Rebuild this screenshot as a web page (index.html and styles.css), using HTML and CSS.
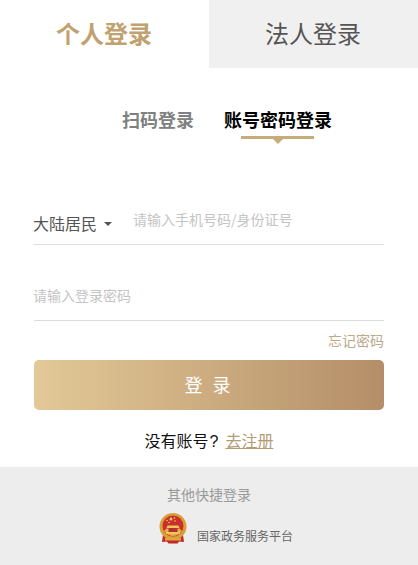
FILE: index.html
```html
<!DOCTYPE html>
<html lang="zh-CN">
<head>
<meta charset="utf-8">
<title>登录</title>
<link rel="stylesheet" href="styles.css">
</head>
<body>
<div class="tabs">
  <div class="tab active">个人登录</div>
  <div class="tab">法人登录</div>
</div>
<div class="subtabs">
  <div class="subtab">扫码登录</div>
  <div class="subtab current">账号密码登录</div>
</div>
<form class="form">
  <div class="field first">
    <span class="region">大陆居民<i class="caret"></i></span>
    <span class="placeholder phone">请输入手机号码/身份证号</span>
  </div>
  <div class="field second">
    <span class="placeholder">请输入登录密码</span>
  </div>
  <div class="forgot"><a>忘记密码</a></div>
  <div class="submit">登 录</div>
  <div class="register">没有账号<span class="qmark">?</span><a>去注册</a></div>
</form>
<footer class="quick">
  <div class="quick-title">其他快捷登录</div>
  <div class="gov">
    <svg class="emblem" viewBox="0 0 28 31" width="28" height="31" aria-hidden="true">
      <path d="M4 22 L3 29 L8 28.500 L9.500 30.500 L18.500 30.500 L20 28.500 L25 29 L24 22 Z" fill="#c4262c"/>
      <circle cx="14" cy="13.500" r="13.500" fill="#d8a038"/>
      <circle cx="14" cy="13" r="10.500" fill="#c9302c"/>
      <path d="M5 18 Q14 28 23 18 L20.500 15.500 L7.500 15.500 Z" fill="#e3b148"/>
      <path d="M8.500 12.500 H19.500 L20.500 15 H7.500 Z" fill="#f0c560"/>
      <rect x="9.500" y="15" width="9" height="4" fill="#b5302a"/>
      <rect x="7" y="19" width="14" height="2" fill="#f0c560"/>
      <circle cx="12" cy="6" r="1.500" fill="#f2d062"/>
      <circle cx="8" cy="7.500" r="0.800" fill="#f2d062"/>
      <circle cx="10" cy="9.500" r="0.800" fill="#f2d062"/>
      <circle cx="15.500" cy="5" r="0.800" fill="#f2d062"/>
      <circle cx="16" cy="8" r="0.800" fill="#f2d062"/>
      <rect x="6" y="25" width="16" height="2.500" fill="#dfa63a"/>
    </svg>
    <span class="gov-name">国家政务服务平台</span>
  </div>
</footer>
</body>
</html>
```
FILE: styles.css
```css
* { box-sizing: border-box; }
html, body { margin: 0; padding: 0; }
body {
  width: 418px;
  height: 565px;
  overflow: hidden;
  background: #fff;
  font-family: "Microsoft YaHei", "Noto Sans CJK SC", "Liberation Sans", sans-serif;
  color: #000;
  display: flex;
  flex-direction: column;
}
.tabs { display: flex; height: 68px; }
.tab {
  flex: 1;
  display: flex;
  align-items: center;
  justify-content: center;
  padding: 0 1px 3px 0;
  font-size: 24px;
  color: #555;
  background: #f0f0f0;
}
.tab.active { background: #fff; color: #bfa26f; font-weight: 700; }
.subtabs {
  display: flex;
  gap: 30px;
  padding: 37px 0 0 122px;
  height: 76px;
}
.subtab {
  position: relative;
  font-size: 18px;
  line-height: 28px;
  font-weight: 700;
  color: #808080;
}
.subtab.current { color: #000; }
.subtab.current::before {
  content: "";
  position: absolute;
  left: 17px;
  top: 31px;
  width: 73px;
  height: 3px;
  background: #c6ab7b;
}
.subtab.current::after {
  content: "";
  position: absolute;
  left: 49px;
  top: 34px;
  border-style: solid;
  border-width: 5px 5px 0;
  border-color: #c6ab7b transparent transparent;
}
.form { padding: 0 34px; flex: 1; }
.field {
  display: flex;
  border-bottom: 1px solid #ddd;
}
.field.first { margin-top: 56px; height: 45px; align-items: flex-start; }
.field.second { margin-top: 30px; height: 46px; align-items: flex-start; padding-top: 10px; }
.region {
  display: flex;
  align-items: center;
  width: 100px;
  font-size: 16px;
  line-height: 24px;
  color: #555;
  margin-top: 11px;
  margin-left: -1px;
}
.caret {
  margin-left: 7px;
  margin-top: 2px;
  border-style: solid;
  border-width: 4px 4px 0;
  border-color: #555 transparent transparent;
}
.placeholder { font-size: 14px; line-height: 20px; color: #c4c4c4; margin-left: -1px; }
.placeholder.phone { margin-top: 9px; margin-left: 0; }
.forgot {
  text-align: right;
  font-size: 14px;
  line-height: 20px;
  color: #bca988;
  margin-top: 9px;
}
.submit {
  margin-top: 10px;
  height: 50px;
  border-radius: 5px;
  background: linear-gradient(90deg, #e3c997, #b48e68);
  color: #fff;
  font-size: 18px;
  line-height: 49px;
  text-align: center;
  letter-spacing: 3px;
}
.register {
  margin-top: 18px;
  text-align: center;
  font-size: 16px;
  line-height: 24px;
  color: #111;
}
.qmark { margin: 0 7px 0 1px; font-family: "Liberation Sans", sans-serif; }
.register a { color: #b39c74; text-decoration: underline; }
.quick {
  height: 98px;
  background: #ededed;
  display: flex;
  flex-direction: column;
  align-items: center;
}
.quick-title {
  margin-top: 17px;
  font-size: 14px;
  line-height: 20px;
  color: #999;
}
.gov {
  display: flex;
  align-items: flex-end;
  align-self: flex-start;
  margin: 9px 0 0 159px;
  height: 31px;
}
.emblem { display: block; flex: none; }
.gov-name {
  margin-left: 10px;
  font-size: 12px;
  line-height: 16px;
  color: #666;
}
```
